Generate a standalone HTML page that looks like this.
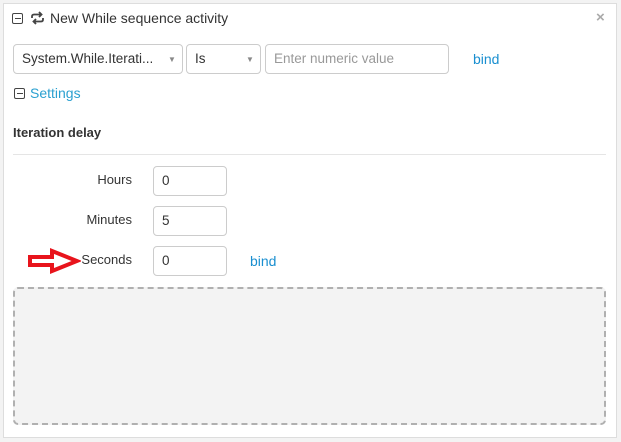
<!DOCTYPE html>
<html><head><style>
*{box-sizing:border-box}
body{margin:0;width:621px;height:442px;background:#f3f3f3;font-family:"Liberation Sans",sans-serif;font-size:13px;color:#333;position:relative;overflow:hidden}
.p{position:absolute;left:3px;top:3px;width:614px;height:435px;background:#fff;border:1px solid #ddd}
.a{position:absolute}
.box{position:absolute;border:1px solid #ccc;border-radius:4px;background:#fff;height:30px;line-height:28px;padding-left:8px;font-size:13.5px}
.lbl{position:absolute;width:120px;text-align:right;left:12px;font-size:13px}
.bind{position:absolute;color:#1a8fd0;font-size:14px}
.sq{position:absolute;width:11px;height:11px;border:1.5px solid #444;border-radius:2px}
.sq:after{content:"";position:absolute;left:1.5px;right:1.5px;top:3.5px;height:1.5px;background:#444}
.car{position:absolute;color:#888;font-size:8px}
</style></head><body>
<div class="p"></div>
<div class="sq" style="left:12px;top:13px"></div>
<svg class="a" style="left:30px;top:11px" width="15" height="14" viewBox="0 0 15 14"><path d="M2 7V5.5Q2 3.5 4 3.5H11M9 1L11.5 3.5L9 6M13 7V8.5Q13 10.5 11 10.5H4M6 8L3.5 10.5L6 13" fill="none" stroke="#444" stroke-width="1.8"/></svg>
<div class="a" style="left:50px;top:10px;font-size:14px">New While sequence activity</div>
<div class="a" style="left:596px;top:9px;color:#aaa;font-size:15px;font-weight:bold">×</div>
<div class="box" style="left:13px;top:44px;width:170px">System.While.Iterati...</div><div class="car" style="left:168px;top:55px">▼</div>
<div class="box" style="left:186px;top:44px;width:75px">Is</div><div class="car" style="left:246px;top:55px">▼</div>
<div class="box" style="left:265px;top:44px;width:184px;color:#999">Enter numeric value</div>
<div class="bind" style="left:473px;top:51px">bind</div>
<div class="sq" style="left:14px;top:88px"></div>
<div class="a" style="left:30px;top:85px;color:#2aa0d0;font-size:14px">Settings</div>
<div class="a" style="left:13px;top:125px;font-weight:bold">Iteration delay</div>
<div class="a" style="left:13px;top:154px;width:593px;height:1px;background:#e5e5e5"></div>
<div class="lbl" style="top:172px">Hours</div><div class="box" style="left:153px;top:166px;width:74px">0</div>
<div class="lbl" style="top:212px">Minutes</div><div class="box" style="left:153px;top:206px;width:74px">5</div>
<div class="lbl" style="top:252px">Seconds</div><div class="box" style="left:153px;top:246px;width:74px">0</div>
<div class="bind" style="left:250px;top:253px">bind</div>
<svg class="a" style="left:27px;top:248px" width="54" height="26" viewBox="0 0 54 26"><path d="M3 9H25V3L50 13L25 23V17H3Z" fill="none" stroke="#e8141c" stroke-width="4" stroke-linejoin="miter"/></svg>
<div class="a" style="left:13px;top:287px;width:593px;height:138px;background:#f3f3f3;border:2px dashed #b0b0b0;border-radius:5px"></div>
</body></html>
